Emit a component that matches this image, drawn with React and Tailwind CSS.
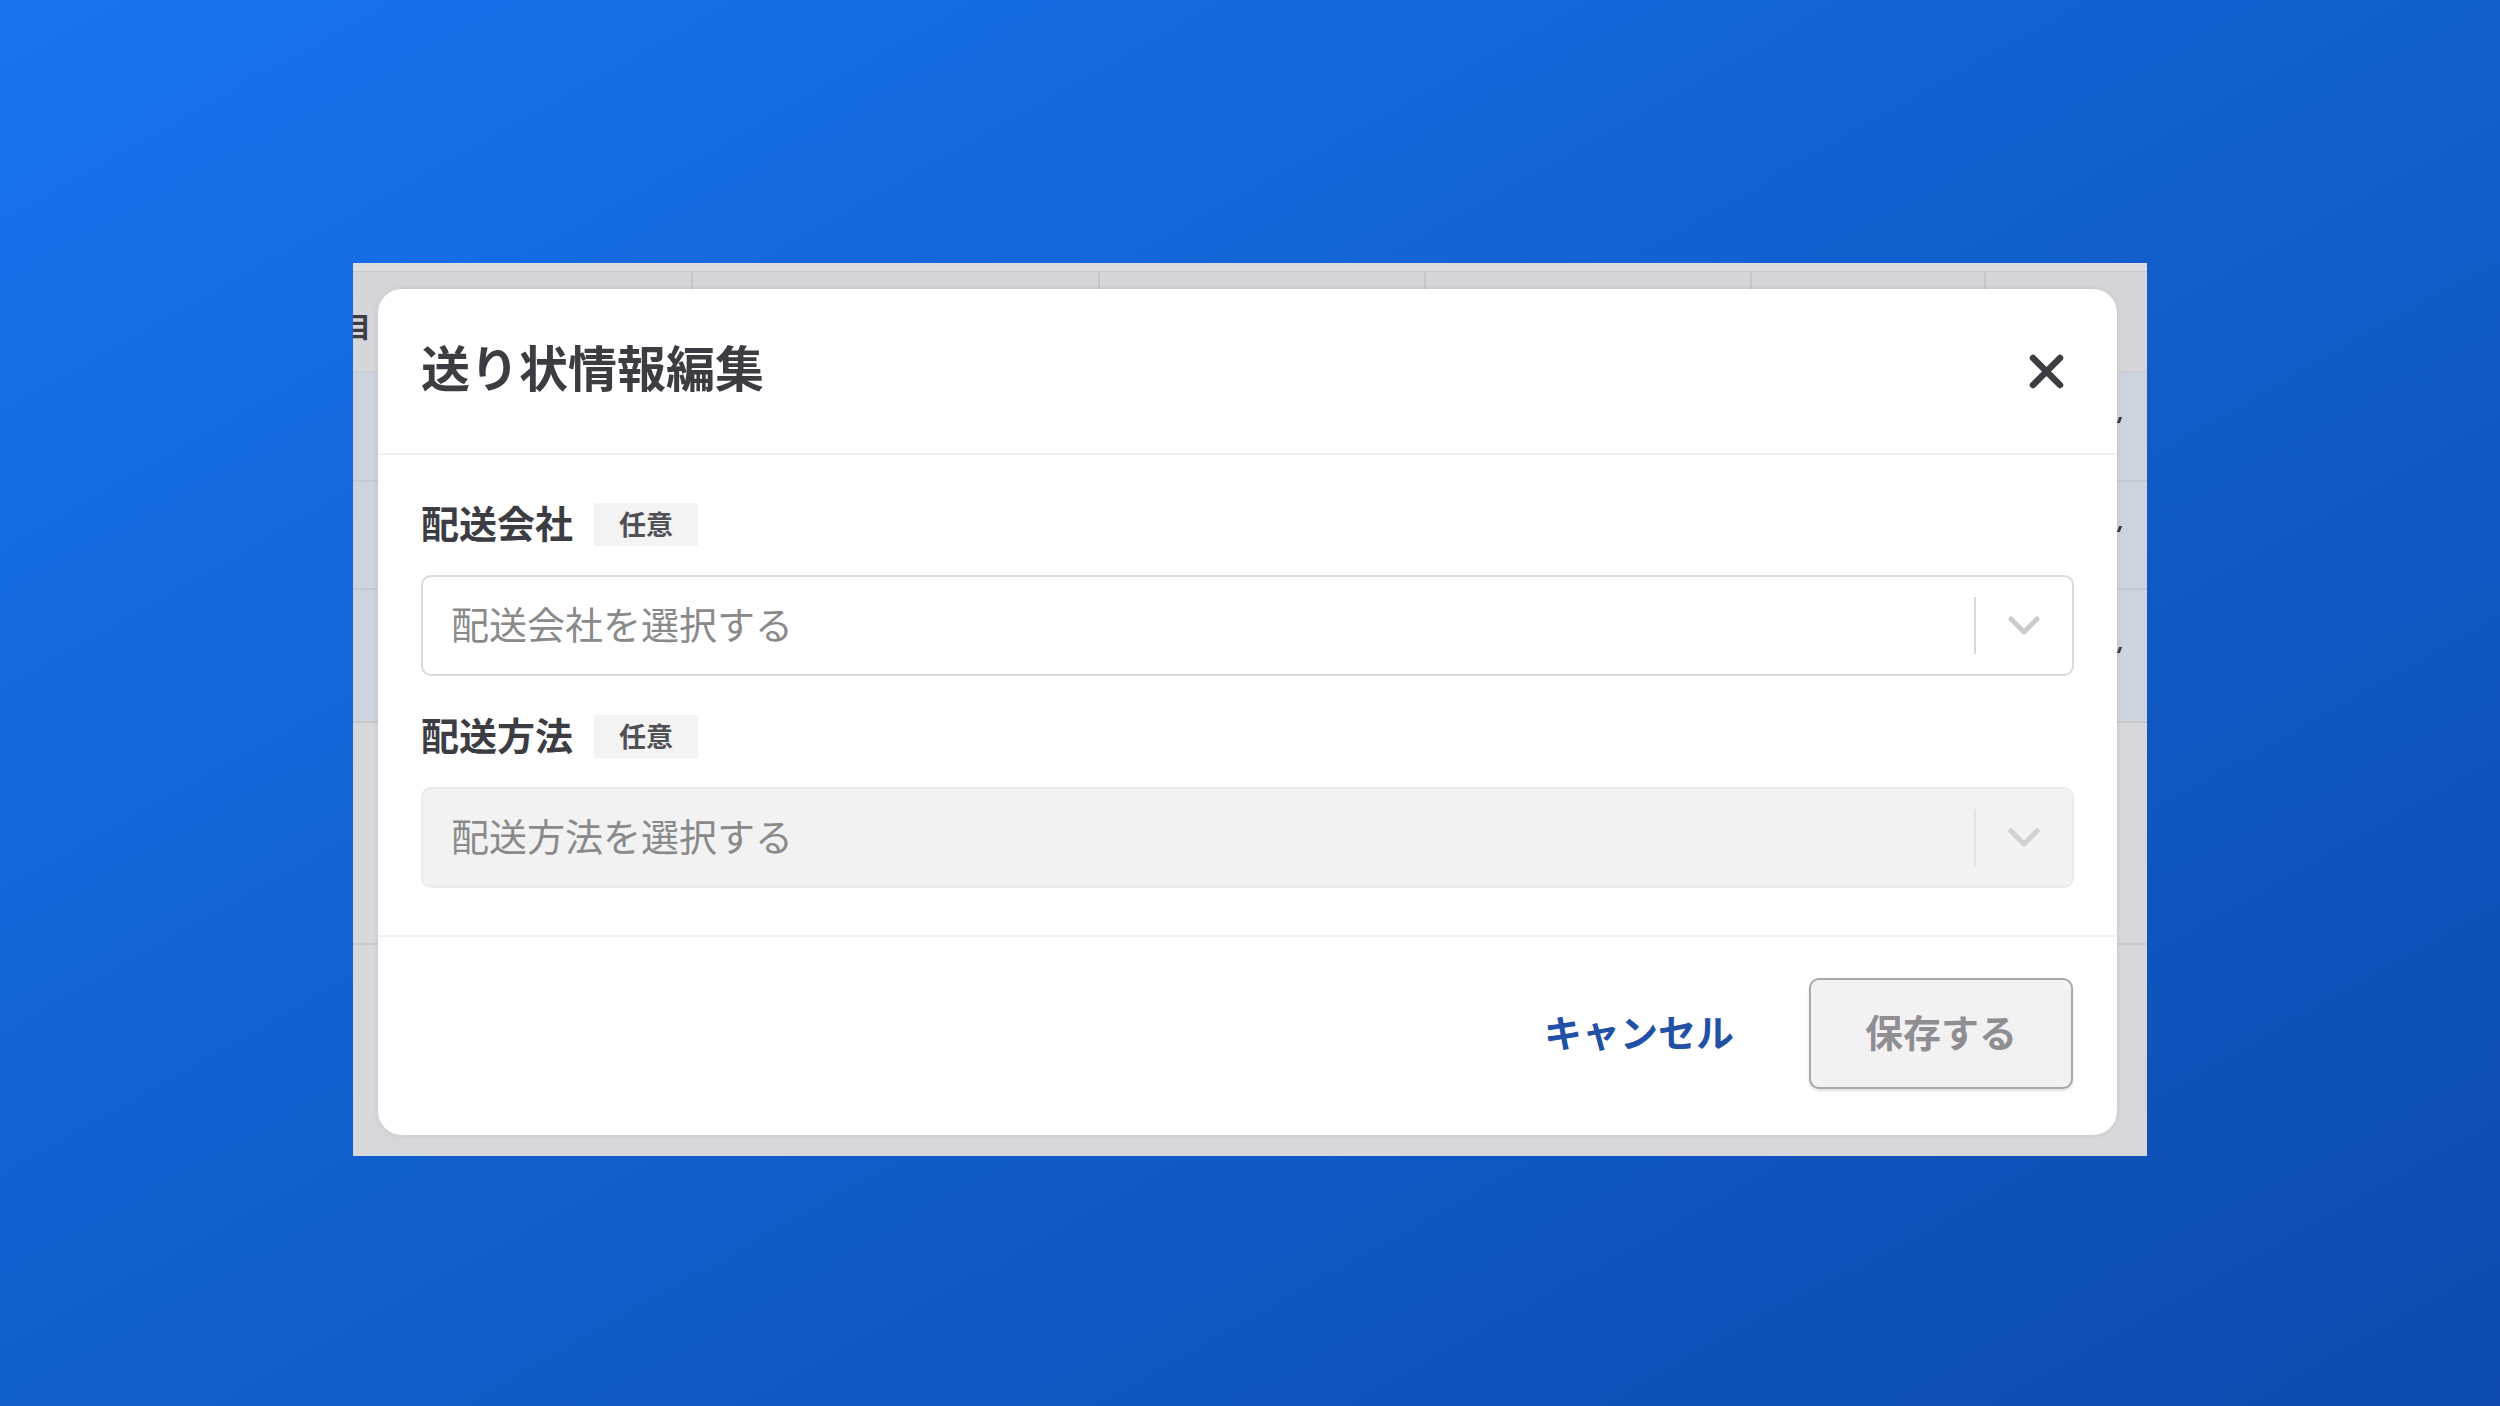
import React from "react";

const FONT = { fontFamily: '"Noto Sans CJK JP", "Noto Sans", sans-serif' };

function Chevron({ color }) {
  return (
    <svg width="32" height="19" viewBox="0 0 32 19" fill="none">
      <path d="M3 3 L16 16 L29 3" stroke={color} strokeWidth="5" strokeLinecap="round" strokeLinejoin="round" />
    </svg>
  );
}

function CloseIcon() {
  return (
    <svg width="35" height="35" viewBox="0 0 35 35" fill="none">
      <path d="M4 4 L31 31 M31 4 L4 31" stroke="#3c3c43" strokeWidth="6.5" strokeLinecap="round" />
    </svg>
  );
}

function FieldLabel({ children }) {
  return (
    <div className="flex items-center h-[43px]">
      <span className="mb-[5px] text-[38px] leading-none font-bold text-[#3c3c43]">{children}</span>
      <span className="ml-[21px] h-[43px] px-[25px] flex items-center bg-[#f4f4f5]">
        <span className="mb-[3px] text-[27px] leading-none font-bold text-[#505055]">任意</span>
      </span>
    </div>
  );
}

function SelectBox({ placeholder, disabled }) {
  return (
    <div
      className={
        disabled
          ? "mt-[29px] h-[101px] flex items-center rounded-[10px] border-2 border-[#ebebeb] bg-[#f2f2f2]"
          : "mt-[29px] h-[101px] flex items-center rounded-[10px] border-2 border-[#dadada] bg-white"
      }
    >
      <span className="flex-1 pl-[28px] mb-[5px] text-[38px] leading-none text-[#8a8a8a]">{placeholder}</span>
      <span className={disabled ? "w-[2px] h-[57px] bg-[#e4e4e4]" : "w-[2px] h-[57px] bg-[#d9d9d9]"} />
      <span className="w-[96px] flex items-center justify-center">
        <Chevron color={disabled ? "#d0d0d0" : "#cbcbcb"} />
      </span>
    </div>
  );
}

function RowMark() {
  return <span className="w-[3px] h-[6px] bg-[#3c3c43] skew-x-[-20deg] mr-[26px] mb-[12px]" />;
}

export default function App() {
  return (
    <div
      className="w-[2500px] h-[1406px] bg-linear-to-br from-[#1873ef] to-[#0c4bad] flex justify-center pt-[263px]"
      style={FONT}
    >
      {/* screen behind the dialog */}
      <div className="relative w-[1794px] h-[893px] bg-[#d7d8dc] overflow-hidden flex flex-col">
        <div className="h-[8px] bg-[#dcdde1] border-b border-[#c7c8cc] box-content" />
        <div className="h-[100px] bg-[#d5d6da] border-b border-[#c8cad0] flex">
          <div className="w-[340px] border-r-2 border-[#c5c6ca] relative">
            <span className="absolute left-[-10px] top-[40px] text-[28px] leading-none font-bold text-[#3c3c43]">目</span>
          </div>
          <div className="w-[407px] border-r-2 border-[#c5c6ca]" />
          <div className="w-[326px] border-r-2 border-[#c5c6ca]" />
          <div className="w-[326px] border-r-2 border-[#c5c6ca]" />
          <div className="w-[234px] border-r-2 border-[#c5c6ca]" />
          <div className="flex-1" />
        </div>
        <div className="h-[110px] bg-[#cdd3df] border-b-2 border-[#c3c8d2] flex items-center justify-end">
          <RowMark />
        </div>
        <div className="h-[108px] bg-[#cdd3df] border-b-2 border-[#c3c8d2] flex items-center justify-end">
          <RowMark />
        </div>
        <div className="h-[133px] bg-[#cdd3df] border-b-2 border-[#c6c8cc] flex items-center justify-end">
          <RowMark />
        </div>
        <div className="h-[222px] border-b-2 border-[#c9cacf]" />
        <div className="flex-1" />

        {/* dialog */}
        <div className="absolute left-[25px] top-[26px] w-[1739px] h-[846px] bg-white rounded-[24px] shadow-[0_0_6px_rgba(0,0,0,0.08)] flex flex-col">
          <div className="h-[166px] flex items-center justify-between pl-[43px] pr-[44px] border-b-2 border-[#eff0f3]">
            <h1 className="mb-[12px] text-[49px] leading-none font-bold text-[#3c3c43]">送り状情報編集</h1>
            <button className="w-[35px] h-[35px] mr-[9px] flex items-center justify-center">
              <CloseIcon />
            </button>
          </div>
          <div className="px-[43px] pt-[48px] pb-[47px]">
            <FieldLabel>配送会社</FieldLabel>
            <SelectBox placeholder="配送会社を選択する" />
            <div className="mt-[39px]">
              <FieldLabel>配送方法</FieldLabel>
            </div>
            <SelectBox placeholder="配送方法を選択する" disabled />
          </div>
          <div className="flex-1 border-t-2 border-[#f1f2f4] flex items-center justify-end pr-[44px] pb-[5px]">
            <button className="mr-[75px] mb-[5px] text-[38px] leading-none font-bold text-[#2150a6]">キャンセル</button>
            <button className="w-[264px] h-[111px] rounded-[10px] border-2 border-[#a8a8ad] bg-[#f2f2f3] shadow-[0_2px_3px_rgba(0,0,0,0.12)] flex items-center justify-center">
              <span className="mb-[5px] text-[38px] leading-none font-bold text-[#8e8e93]">保存する</span>
            </button>
          </div>
        </div>
      </div>
    </div>
  );
}
